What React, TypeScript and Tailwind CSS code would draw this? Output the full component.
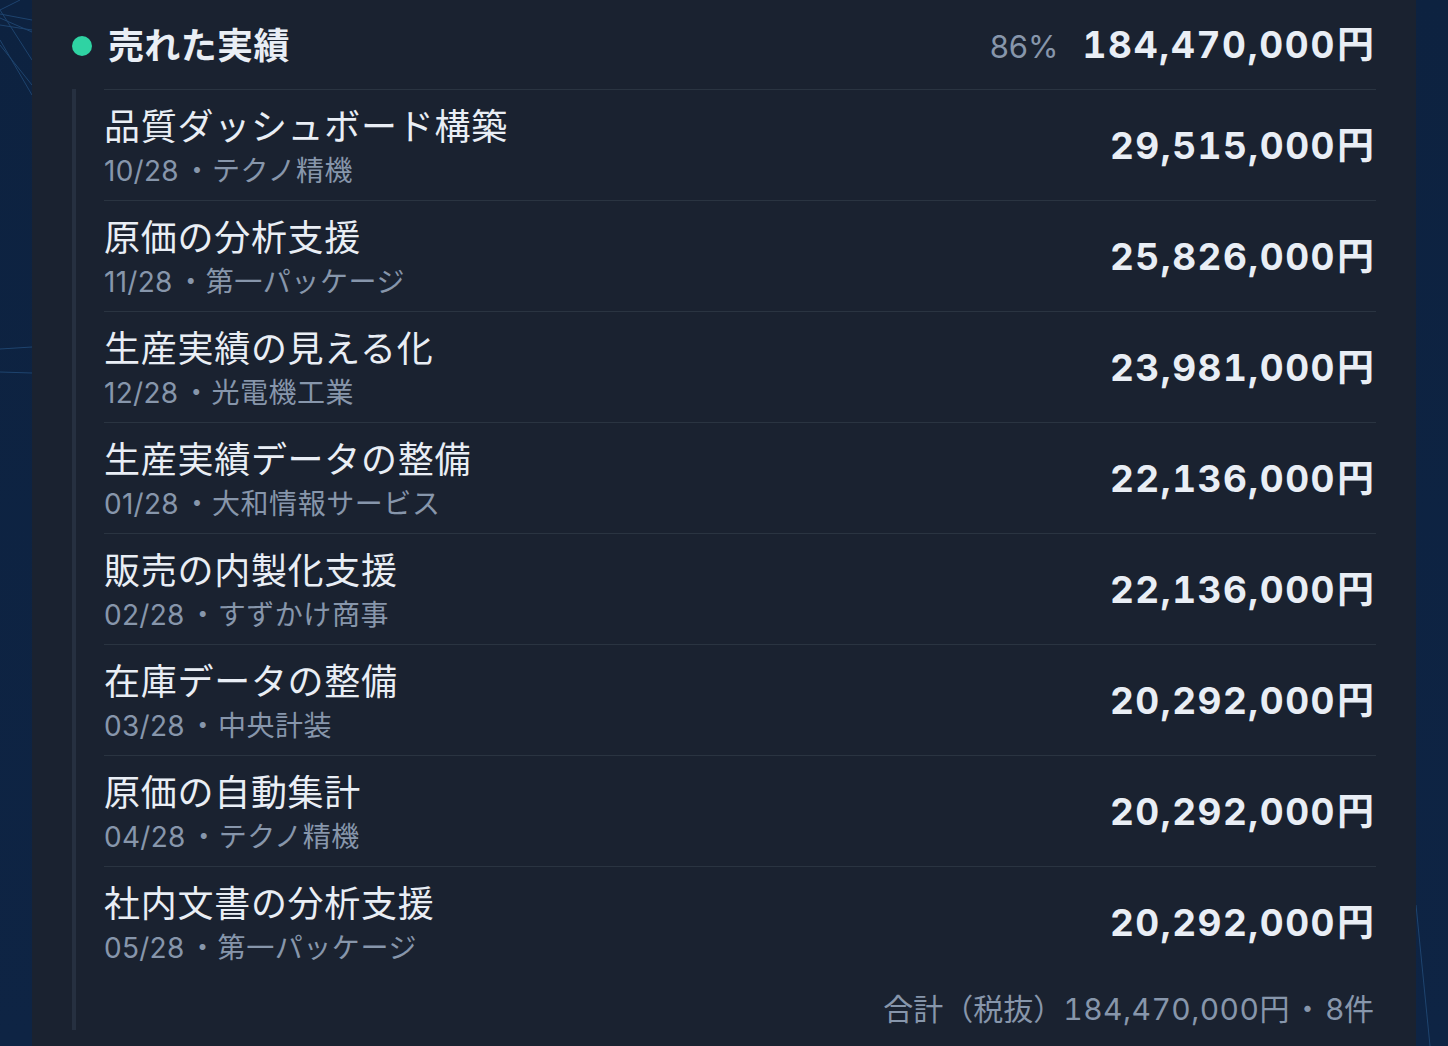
import React from "react";

const rows = [
  { title: "品質ダッシュボード構築", date: "10/28", client: "テクノ精機", amount: "29,515,000" },
  { title: "原価の分析支援", date: "11/28", client: "第一パッケージ", amount: "25,826,000" },
  { title: "生産実績の見える化", date: "12/28", client: "光電機工業", amount: "23,981,000" },
  { title: "生産実績データの整備", date: "01/28", client: "大和情報サービス", amount: "22,136,000" },
  { title: "販売の内製化支援", date: "02/28", client: "すずかけ商事", amount: "22,136,000" },
  { title: "在庫データの整備", date: "03/28", client: "中央計装", amount: "20,292,000" },
  { title: "原価の自動集計", date: "04/28", client: "テクノ精機", amount: "20,292,000" },
  { title: "社内文書の分析支援", date: "05/28", client: "第一パッケージ", amount: "20,292,000" },
];

const font = { fontFamily: '"Inter", "Noto Sans CJK JP", sans-serif' };

export default function App() {
  return (
    <div
      className="relative w-[1448px] h-[1046px] overflow-hidden bg-gradient-to-b from-[#0d2240] to-[#0e2444]"
      style={font}
    >
      <svg className="absolute inset-0" width="1448" height="1046" viewBox="0 0 1448 1046">
        <g stroke="#2a5a8c" strokeWidth="1" opacity="0.6" fill="none">
          <line x1="0" y1="10" x2="32" y2="60" />
          <line x1="0" y1="40" x2="32" y2="95" />
          <line x1="0" y1="14" x2="32" y2="20" />
          <line x1="0" y1="25" x2="32" y2="30" />
          <line x1="0" y1="18" x2="32" y2="32" />
          <line x1="0" y1="45" x2="32" y2="85" />
          <line x1="0" y1="10" x2="20" y2="0" />
          <line x1="0" y1="349" x2="32" y2="347" />
          <line x1="0" y1="372" x2="32" y2="373" />
          <line x1="1416" y1="905" x2="1430" y2="1046" />
        </g>
      </svg>
      <div className="relative ml-[32px] w-[1384px] h-full bg-[#1a2230] pl-[40px] pr-[40px]">
        <div className="h-[89px] flex items-center pt-[3px]">
          <div className="w-[20px] h-[20px] rounded-full bg-[#2fd3a3]" />
          <div className="ml-[16px] text-[36px] font-bold text-[#e9eef5] leading-[44px] tracking-[0.01em]">売れた実績</div>
          <div className="ml-auto flex items-baseline pr-[2px]">
            <span className="text-[31px] text-[#8796ab] leading-[44px]">86%</span>
            <span className="ml-[24px] text-[37px] font-bold text-[#e9eef5] leading-[44px] tracking-[0.045em] tabular-nums">
              184,470,000<span className="ml-[1px] tracking-normal">円</span>
            </span>
          </div>
        </div>
        <div className="border-l-[4px] border-[#263040] pl-[28px]">
          {rows.map((r, i) => (
            <div
              key={i}
              className="h-[111px] border-t border-[#2a3441] flex items-center justify-between pr-[2px]"
            >
              <div className="flex flex-col mt-[4px]">
                <div className="text-[36px] leading-[44px] text-[#e9eef5] tracking-[0.02em]">{r.title}</div>
                <div className="mt-[4px] text-[28px] leading-[36px] text-[#8796ab]">
                  <span className="tracking-[0.01em]">{r.date}</span>
                  <span className="ml-[4px] mr-[1px]">・</span>
                  <span className="tracking-[0.02em]">{r.client}</span>
                </div>
              </div>
              <div className="text-[37px] font-bold text-[#e9eef5] leading-[44px] tracking-[0.04em] tabular-nums mt-[2px]">
                {r.amount}
                <span className="ml-[1px] tracking-normal">円</span>
              </div>
            </div>
          ))}
          <div className="pt-[14px] pb-[3px] flex justify-end pr-[2px]">
            <div className="text-[30px] leading-[36px] text-[#8796ab]">
              合計（税抜）<span className="tabular-nums tracking-[0.015em]">184,470,000</span>円
              <span className="mx-[3px]">・</span>8件
            </div>
          </div>
        </div>
      </div>
    </div>
  );
}
